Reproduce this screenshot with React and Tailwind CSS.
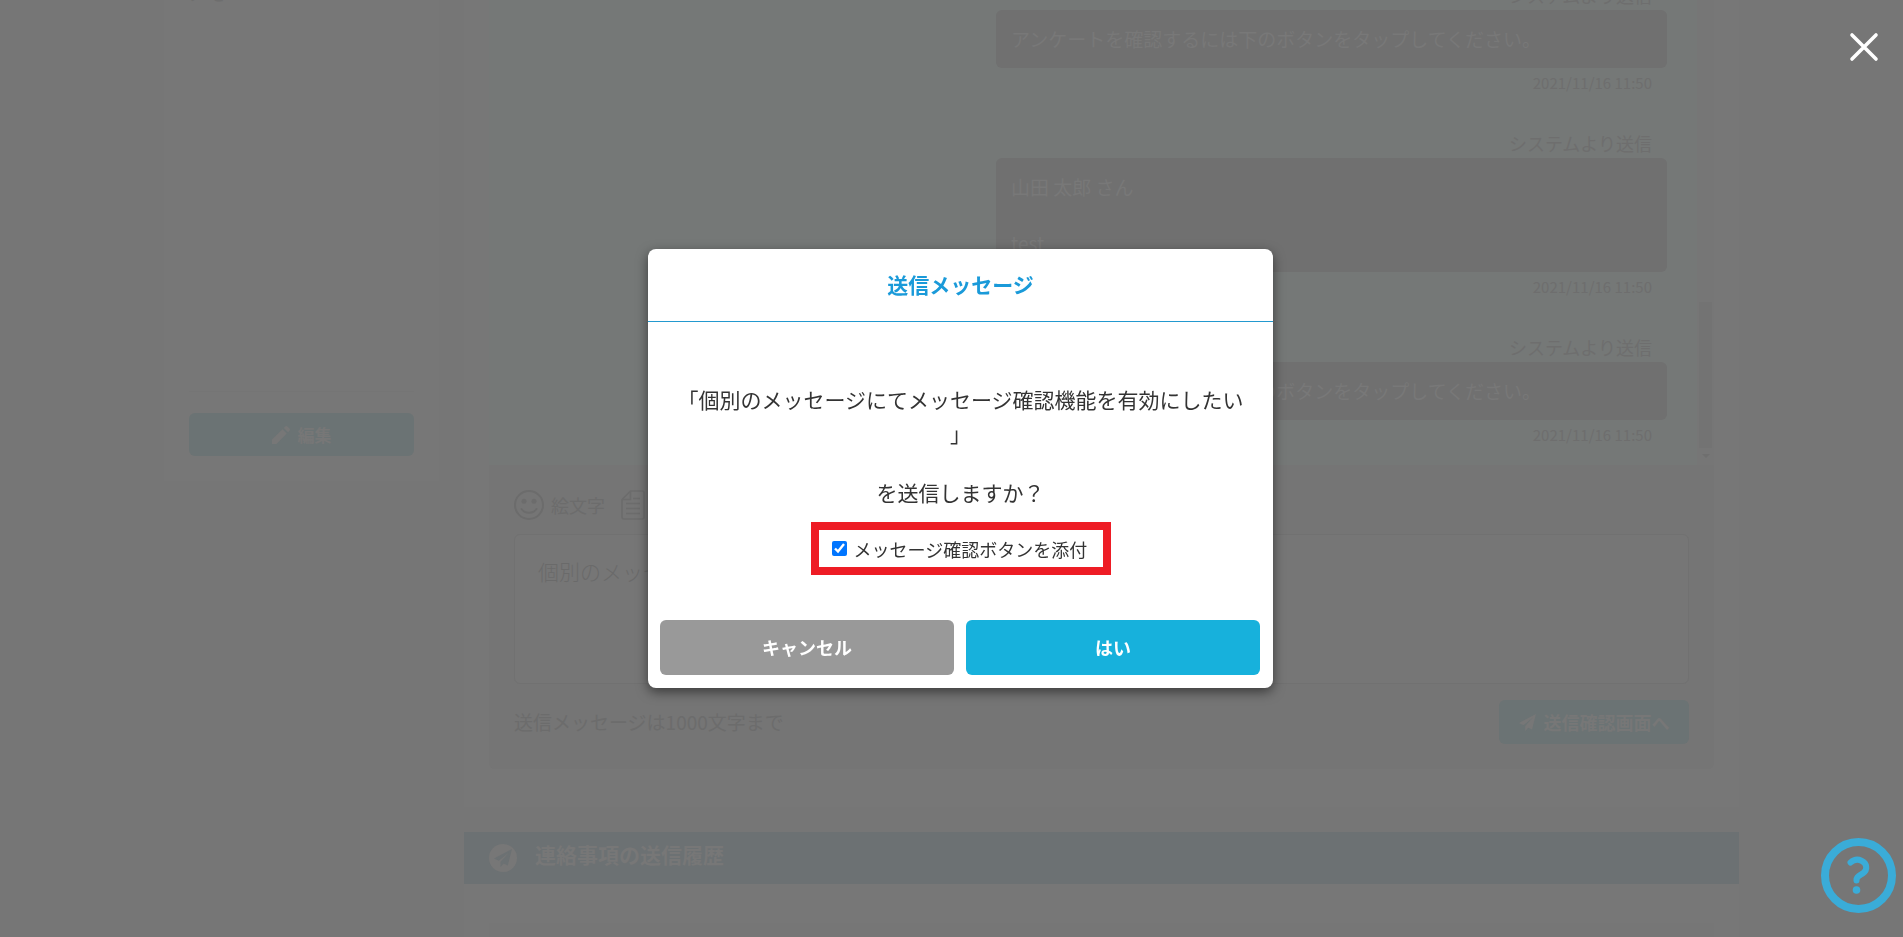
import { useState } from 'react';

const messages = [
  {
    id: 1,
    sender: 'システムより送信',
    lines: ['アンケートを確認するには下のボタンをタップしてください。'],
    date: '2021/11/16 11:50'
  },
  {
    id: 2,
    sender: 'システムより送信',
    lines: ['山田 太郎 さん', '', 'test'],
    date: '2021/11/16 11:50'
  },
  {
    id: 3,
    sender: 'システムより送信',
    lines: ['アンケートを確認するには下のボタンをタップしてください。'],
    date: '2021/11/16 11:50'
  }
];

const PencilIcon = () => (
  <svg viewBox="0 0 18 18" className="w-[18px] h-[18px]" fill="currentColor" aria-hidden="true">
    <path d="M0 18v-4.500L10.500 3.200l4.200 4.200L4.500 18zM11.800 2 13.300.500a1.600 1.600 0 0 1 2.200 0l2 2a1.600 1.600 0 0 1 0 2.200L16 6.200z" />
  </svg>
);

const PlaneIcon = ({ className }) => (
  <svg viewBox="0 0 17 17" className={className} fill="currentColor" aria-hidden="true">
    <path d="M17 0 0 9l4.500 2.200L14 3.500 6.200 12v5l3-3.300L13 15.500z" />
  </svg>
);

const SmileIcon = () => (
  <svg viewBox="0 0 30 30" className="w-[30px] h-[30px]" fill="none" aria-hidden="true">
    <circle cx="15" cy="15" r="14" stroke="currentColor" strokeWidth="2" />
    <circle cx="10" cy="11.200" r="2.500" fill="currentColor" />
    <circle cx="20" cy="11.200" r="2.500" fill="currentColor" />
    <path d="M7.500 19c3.500 5 11.500 5 15 0" stroke="currentColor" strokeWidth="2" strokeLinecap="round" />
  </svg>
);

const TemplateIcon = () => (
  <svg viewBox="0 0 24 30" className="w-6 h-[30px]" fill="none" stroke="currentColor" aria-hidden="true">
    <path d="M9.500 1H21a2 2 0 0 1 2 2v24a2 2 0 0 1-2 2H3a2 2 0 0 1-2-2V9.500zV9.500H1" strokeWidth="1.600" />
    <path d="M12 8.500h7M5 13.500h14M5 18.500h14M5 23.500h14" strokeWidth="1.500" />
  </svg>
);

const HelpIcon = () => (
  <svg viewBox="0 0 75 75" className="w-[75px] h-[75px]" fill="none" aria-hidden="true">
    <circle cx="37.500" cy="37.500" r="33.500" stroke="currentColor" strokeWidth="8" />
    <path
      d="M29.500 24.500c4-3.500 8.500-3 11-1.800 5.500 2.500 6.500 9 1.500 12.500-3.500 2.300-6.500 3-6.500 6.500v.800"
      stroke="currentColor"
      strokeWidth="6"
      strokeLinecap="round"
      strokeLinejoin="round"
    />
    <circle cx="35.500" cy="52" r="3.800" fill="currentColor" />
  </svg>
);

const Message = ({ sender, lines, date }) => (
  <div className="w-[671px] shrink-0">
    <p className="px-[15px] pb-[2px] text-right text-[18px] leading-[26px]">{sender}</p>
    <div className="rounded-md bg-[#707070] p-[15px] text-[19px] leading-7 text-[#787878]">
      {lines.map((line, i) => (
        <p key={i} className="min-h-7">{line}</p>
      ))}
    </div>
    <p className="px-[15px] pb-[2px] text-right text-[15px] leading-[30px]">{date}</p>
  </div>
);

const Sidebar = () => (
  <aside className="flex h-[481px] w-[275px] shrink-0 flex-col justify-end bg-[#777777] px-[25px] pb-[25px]">
    <div className="h-[407px] shrink-0 text-[18px] leading-[18px]">
      <p>メモ</p>
    </div>
    <div className="border-t border-[#757575] pt-[21px]">
      <button className="flex h-[43px] w-full items-center justify-center gap-2 rounded-md bg-[#6b7374] text-[17px] font-bold text-[#777777]">
        <PencilIcon />
        編集
      </button>
    </div>
  </aside>
);

const Composer = () => (
  <div className="rounded-b-md bg-[#757575] p-[25px]">
    <div className="flex items-center gap-4 pb-[14px] text-[18px] leading-[30px] text-[#6c6c6c]">
      <button className="flex items-center gap-[7px]">
        <SmileIcon />
        絵文字
      </button>
      <button aria-label="テンプレート">
        <TemplateIcon />
      </button>
    </div>
    <textarea
      aria-label="メッセージ"
      defaultValue="個別のメッセージにてメッセージ確認機能を有効にしたい"
      className="block h-[150px] w-full resize-none rounded-md border border-[#717171] bg-[#767676] px-[23px] py-[22px] text-[21px] font-light leading-7 text-[#6a6a6a]"
    />
    <div className="flex items-center justify-between pt-4">
      <p className="text-[19px] text-[#6c6c6c]">送信メッセージは1000文字まで</p>
      <button className="flex h-11 w-[190px] items-center justify-center gap-2 rounded-md bg-[#6b7374] text-[18px] font-bold text-[#777777]">
        <PlaneIcon className="w-[17px] h-[17px]" />
        送信確認画面へ
      </button>
    </div>
  </div>
);

const ConfirmDialog = () => {
  const [attach, setAttach] = useState(true);

  return (
    <div
      role="dialog"
      aria-labelledby="dialog-title"
      className="w-[625px] rounded-lg bg-white text-[#333333] shadow-[0_4px_12px_rgba(0,0,0,0.5)]"
    >
      <h2
        id="dialog-title"
        className="border-b border-[#2399cf] pb-[21px] pt-[19px] text-center text-[21px] font-bold leading-8 text-[#1a9ad9]"
      >
        送信メッセージ
      </h2>
      <div className="flex flex-col items-center px-7 pt-[60px] text-center text-[21px] leading-[34px]">
        <p className="break-all [line-break:anywhere]">
          「個別のメッセージにてメッセージ確認機能を有効にしたい
          <br />」
        </p>
        <p className="pt-[25px]">を送信しますか？</p>
        <label className="mt-[13px] flex h-[53px] w-[300px] items-center gap-[7px] border-8 border-[#ee1c25] pl-[13px] text-[18px]">
          <input
            type="checkbox"
            checked={attach}
            onChange={(e) => setAttach(e.target.checked)}
            className="h-[15px] w-[15px] accent-[#0075ff]"
          />
          メッセージ確認ボタンを添付
        </label>
      </div>
      <div className="grid grid-cols-2 gap-3 pb-[13px] pl-3 pr-[13px] pt-[45px] text-[18px] font-bold text-white">
        <button className="h-[55px] rounded-md bg-[#999999]">キャンセル</button>
        <button className="h-[55px] rounded-md bg-[#17b1dc]">はい</button>
      </div>
    </div>
  );
};

export default function App() {
  return (
    <div
      lang="ja"
      className="h-screen overflow-hidden bg-[#767676] font-['Noto_Sans_CJK_JP','Noto_Sans',sans-serif] text-[#6e6e6e]"
    >
      <div className="mx-auto flex max-w-[1575px] items-start gap-[25px]">
        <Sidebar />
        <main className="min-w-0 flex-1">
          <section className="bg-[#777777] px-[25px] pb-[38px]">
            <div className="flex h-[465px]">
              <div className="flex flex-1 flex-col items-end justify-end gap-[30px] overflow-hidden bg-[#757877] pb-[13px] pr-[30px]">
                {messages.map((message) => (
                  <Message key={message.id} {...message} />
                ))}
              </div>
              {/* Scrollbar */}
              <div className="flex w-[17px] flex-col items-center justify-end gap-[6px] bg-[#767676] pb-[7px]">
                <div className="h-[146px] w-[13px] bg-[#737373]" />
                <div className="border-x-4 border-t-4 border-x-transparent border-t-[#6f6f6f]" />
              </div>
            </div>
            <Composer />
          </section>

          <section className="mt-[25px] bg-[#777777]">
            <h2 className="flex h-[52px] items-center gap-[18px] bg-[#6c7173] px-[25px] text-[21px] font-bold text-[#777777]">
              <span className="flex h-7 w-7 items-center justify-center rounded-full bg-[#777777] text-[#6c7173]">
                <PlaneIcon className="h-[18px] w-[18px]" />
              </span>
              <span className="pb-[6px]">連絡事項の送信履歴</span>
            </h2>
            <div className="px-[25px] pt-[39px]">
              <div className="h-24 bg-[#767676]" />
            </div>
          </section>
        </main>
      </div>

      {/* Dialog layer */}
      <div className="fixed inset-0 flex items-center justify-center pl-[18px]">
        <ConfirmDialog />
      </div>
      <button aria-label="閉じる" className="fixed right-6 top-8 text-white">
        <svg viewBox="0 0 30 30" className="w-[30px] h-[30px]" stroke="currentColor" strokeWidth="3.600" strokeLinecap="round">
          <path d="M3 3l24 24M27 3 3 27" />
        </svg>
      </button>
      <button aria-label="ヘルプ" className="fixed bottom-6 right-[7px] text-[#3aacd8]">
        <HelpIcon />
      </button>
    </div>
  );
}
